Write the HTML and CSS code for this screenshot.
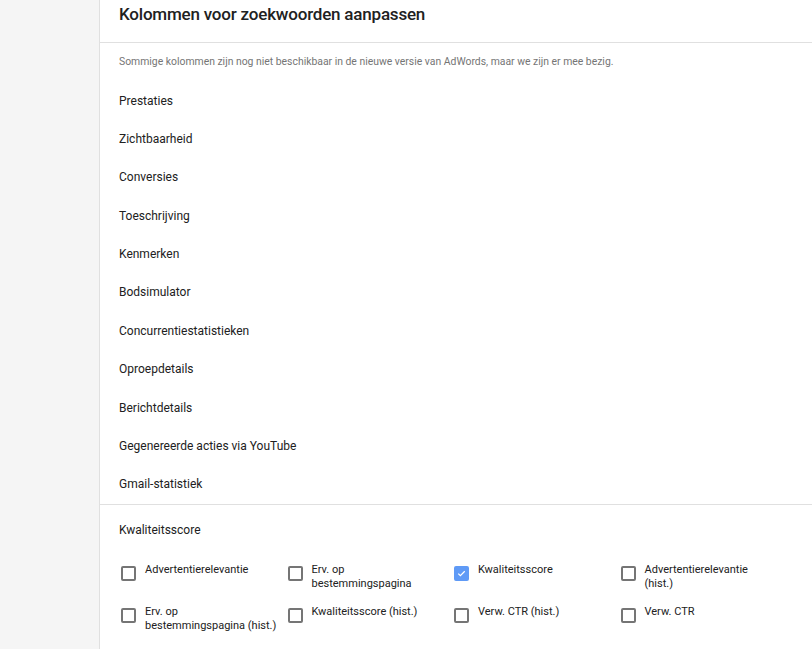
FILE: index.html
```html
<!DOCTYPE html>
<html lang="nl">
<head>
<meta charset="utf-8">
<link rel="stylesheet" href="styles.css">
</head>
<body>
<div class="side"></div>
<div class="main">
  <div class="header"><h1 class="title">Kolommen voor zoekwoorden aanpassen</h1></div>
  <p class="note">Sommige kolommen zijn nog niet beschikbaar in de nieuwe versie van AdWords, maar we zijn er mee bezig.</p>
  <ul class="groups">
    <li>Prestaties</li>
    <li>Zichtbaarheid</li>
    <li>Conversies</li>
    <li>Toeschrijving</li>
    <li>Kenmerken</li>
    <li>Bodsimulator</li>
    <li>Concurrentiestatistieken</li>
    <li>Oproepdetails</li>
    <li>Berichtdetails</li>
    <li>Gegenereerde acties via YouTube</li>
    <li>Gmail-statistiek</li>
  </ul>
  <div class="section">
    <div class="section-title">Kwaliteitsscore</div>
    <div class="grid">
      <div class="opt"><span class="box"></span><span class="label">Advertentierelevantie</span></div>
      <div class="opt"><span class="box"></span><span class="label">Erv. op bestemmingspagina</span></div>
      <div class="opt"><span class="box checked"><svg viewBox="0 0 16 16" width="15" height="15"><path d="M3.3 8.1l3.1 3.1 6.3-6.4" fill="none" stroke="#fff" stroke-width="1.8"/></svg></span><span class="label">Kwaliteitsscore</span></div>
      <div class="opt"><span class="box"></span><span class="label">Advertentierelevantie (hist.)</span></div>
      <div class="opt"><span class="box"></span><span class="label">Erv. op bestemmingspagina (hist.)</span></div>
      <div class="opt"><span class="box"></span><span class="label">Kwaliteitsscore (hist.)</span></div>
      <div class="opt"><span class="box"></span><span class="label">Verw. CTR (hist.)</span></div>
      <div class="opt"><span class="box"></span><span class="label">Verw. CTR</span></div>
    </div>
  </div>
</div>
</body>
</html>
```
FILE: styles.css
```css
html, body {
  margin: 0;
  padding: 0;
  height: 100%;
}
body {
  display: flex;
  font-family: Roboto, "Liberation Sans", Arial, sans-serif;
  color: #212121;
  background: #fff;
  overflow: hidden;
}
.side {
  width: 99px;
  flex: none;
  background: #f5f5f5;
  border-right: 1px solid #e0e0e0;
}
.main {
  flex: 1;
  background: #fff;
}
.header {
  height: 42px;
  border-bottom: 1px solid #e0e0e0;
  padding-left: 19px;
}
.title {
  margin: 0;
  font-size: 17px;
  font-weight: 500;
  letter-spacing: -0.2px;
  line-height: 28px;
  color: #212121;
}
.note {
  margin: 0;
  padding: 11px 0 0 19px;
  font-size: 10.4px;
  line-height: 16px;
  color: #757575;
}
.groups {
  list-style: none;
  margin: 0;
  padding: 11.5px 0 0 0;
  border-bottom: 1px solid #e0e0e0;
}
.groups li {
  height: 38.4px;
  line-height: 38.4px;
  padding-left: 19px;
  font-size: 12px;
}
.section {
  padding: 16.5px 0 0 19px;
}
.section-title {
  font-size: 12px;
  line-height: 18px;
}
.grid {
  display: grid;
  grid-template-columns: repeat(4, 166.5px);
  row-gap: 14px;
  margin-top: 24px;
}
.opt {
  display: flex;
  align-items: flex-start;
}
.box {
  flex: none;
  box-sizing: border-box;
  width: 15px;
  height: 15px;
  margin: 3px 9px 0 2px;
  border: 2px solid #757575;
  border-radius: 2px;
  display: flex;
  align-items: center;
  justify-content: center;
}
.box svg {
  display: block;
}
.box.checked {
  background: #5f9af6;
  border-color: #5f9af6;
}
.label {
  width: 132px;
  font-size: 11px;
  line-height: 14px;
}
```
